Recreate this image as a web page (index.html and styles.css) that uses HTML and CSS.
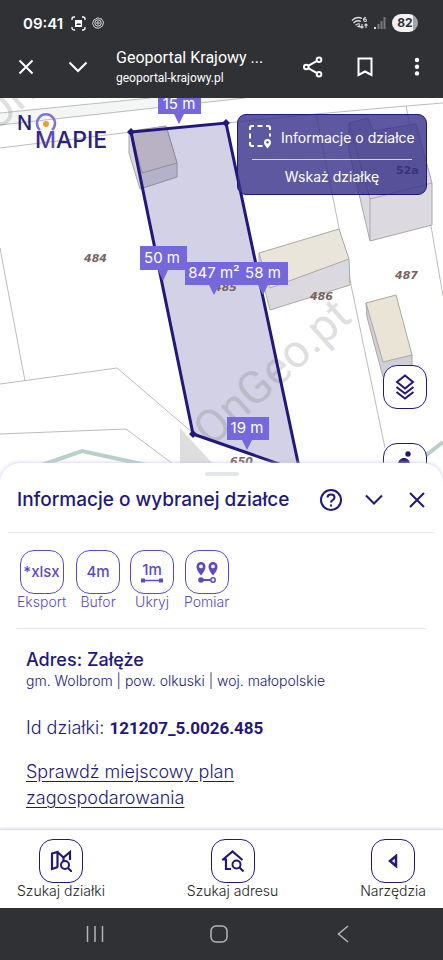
FILE: index.html
```html
<!DOCTYPE html>
<html lang="pl">
<head>
  <meta charset="UTF-8">
  <meta name="viewport" content="width=device-width, initial-scale=1">
  <title>Geoportal Krajowy</title>
  <link rel="stylesheet" href="styles.css">
</head>
<body>
  <header class="browser">
    <div class="status">
      <span class="time">09:41</span>
      <svg width="15" height="15" viewBox="0 0 15 15" fill="none" stroke="#fff" stroke-width="1.3">
        <path d="M1 4V3a2 2 0 0 1 2-2h1M11 1h1a2 2 0 0 1 2 2v1M14 11v1a2 2 0 0 1-2 2h-1M4 14H3a2 2 0 0 1-2-2v-1"/>
        <path d="M4 4h7v7H4z" fill="#fff" stroke="none"/>
        <path d="M5 9l2-2 1 1 1-1 1 2z" fill="#303135" stroke="none"/>
      </svg>
      <svg width="12" height="12" viewBox="0 0 12 12" fill="none" stroke="#ddd">
        <path d="M6 .7l1.6 1 1.9.1.9 1.7 1.1 1.6-.5 1.9-.4 1.9-1.6 1-1.6 1L6 11.300l-1.9-.5-1.800-.7-.8-1.700L.6 6.500l.6-1.800.7-1.800L3.700 2z" stroke-width="1"/>
        <circle cx="6" cy="6" r="3.200"/>
        <circle cx="6" cy="6" r="1.200"/>
      </svg>
      <svg class="wifi" width="17" height="14" viewBox="0 0 17 14" fill="none" stroke="#ddd" stroke-width="1.300">
        <path d="M1 4.500C4 1.300 8 1 11 2.500M2.500 7c2.300-2.400 5-2.700 7.500-1.500M4.500 9.200C6 7.700 7.500 7.600 9 8.200"/>
        <path d="M7 10.500l1.500-1 .5 1.500zM15 1.500c-3-.5-3 4-1 4s2-3-1-2.200M11 8v4M9.500 10.500L11 12l1.500-1.500M15 12V8M13.500 9.500L15 8l1.500 1.500" stroke-width="1.100"/>
      </svg>
      <svg width="12" height="12" viewBox="0 0 12 12">
        <path d="M0 10h2v2H0z" fill="#ddd"/>
        <path d="M3.500 7h2v5h-2zM6.500 4h2v8h-2zM9.500 0h2v12h-2z" fill="#77787b"/>
      </svg>
      <span class="battery">82</span>
    </div>
    <div class="toolbar">
      <button aria-label="Zamknij kartę"><svg width="16" height="16" viewBox="0 0 16 16"><path d="M1.500 1.500l13 13M14.500 1.500l-13 13"/></svg></button>
      <button aria-label="Zwiń"><svg width="20" height="12" viewBox="0 0 20 12"><path d="M1.500 1.500L10 10l8.500-8.500"/></svg></button>
      <div class="page">
        <div class="page-title">Geoportal Krajowy ...</div>
        <div class="page-url">geoportal-krajowy.pl</div>
      </div>
      <button aria-label="Udostępnij"><svg width="20" height="22" viewBox="0 0 20 22"><path d="M5.200 9.800l8.800-5M5.200 12.200l8.800 5"/><circle cx="3.300" cy="11" r="2.300"/><circle cx="16" cy="3.700" r="2.300"/><circle cx="16" cy="18.300" r="2.300"/></svg></button>
      <button aria-label="Zakładka"><svg width="16" height="20" viewBox="0 0 16 20"><path d="M1.500 1.500h13v16.500L8 14.500 1.500 18z"/></svg></button>
      <button aria-label="Menu"><svg width="6" height="20" viewBox="0 0 6 20"><g fill="#fff" stroke="none"><circle cx="3" cy="3" r="2.200"/><circle cx="3" cy="9.700" r="2.200"/><circle cx="3" cy="16.400" r="2.200"/></g></svg></button>
    </div>
  </header>

  <main class="map">
    <svg class="map-canvas" viewBox="0 0 443 386" preserveAspectRatio="xMidYMin slice">
      <path d="M0 15L150 0H250L0 27z" fill="#f3f6f4"/>
      <g fill="none" stroke="#bcbcba">
        <path d="M0 15L150 0M0 27L245 0M0 50L131 34M226 25L316 16 406 8 443 5"/>
        <path d="M316 16L339 130 351 187 385 350M406 8L431 128 443 198"/>
        <path d="M0 150L25 283M0 286L117 270 193 335M0 336L126 331 173 366 195 386"/>
      </g>
      <path d="M30 371L82 353 160 370M420 362L443 344" fill="none" stroke="#b9cfca" stroke-width="4"/>

      <g stroke="#aaa8a6" stroke-linejoin="round">
        <path d="M349 25V53L370 143 432 127V85L416 26 373 33 368 20z" fill="#dcd9e1"/>
        <path d="M349 25L370 101 432 85M370 101V143" fill="none"/>
        <path d="M259 155V169L270 212 350 187 349 161z" fill="#dbd8df"/>
        <path d="M259 155L339 131 349 161 270 190z" fill="#eae5da"/>
        <path d="M366 205L367 219 383 279 412 272V257z" fill="#d0ced8"/>
        <path d="M366 205L396 197 412 257 383 264z" fill="#e9e4d5"/>
        <path d="M129 34V55L140 91 177 79V65L166 28z" fill="#d9d7df"/>
        <path d="M131 33L166 28 177 65 142 75z" fill="#dfd8d6"/>
      </g>

      <path d="M180 330V366H213z" fill="#dedede"/>
      <path d="M131 34L226 25 302 384V374L193 336z" fill="#22187c" fill-opacity=".2"/>
      <g class="watermark">
        <text transform="translate(211 350) rotate(-42)">OnGeo.pt</text>
        <text transform="translate(-4 35) rotate(-42)">On</text>
      </g>
      <path d="M302 374L193 336 131 34 226 25 300 374" fill="none" stroke="#22187c" stroke-width="3"/>
      <path d="M131 30l4 4-4 4-4-4zM226 21l4 4-4 4-4-4zM193 332l4 4-4 4-4-4z" fill="#22187c"/>

      <g class="plot">
        <text x="84" y="164">484</text>
        <text x="214" y="193">485</text>
        <text x="310" y="202">486</text>
        <text x="395" y="181">487</text>
        <text x="230" y="367">650</text>
        <text class="house" x="396" y="76">52a</text>
      </g>

      <path d="M158 0H201V16H184L179 26 174 16H158zM140 148H187V172H168L163 183 158 172H140zM185 164H288V187H268L263 197 258 187H219L214 197 209 187H185zM227 319H269V342H252L247 352 242 342H227z" fill="#7568dd"/>
      <g class="measure">
        <text x="179" y="11">15 m</text>
        <text x="162" y="165">50 m</text>
        <text x="214" y="180">847 m²</text>
        <text x="263" y="180">58 m</text>
        <text x="247" y="335">19 m</text>
      </g>
    </svg>

    <a class="logo" href="#" aria-label="Na mapie">
      <svg width="98" height="42" viewBox="0 0 98 42">
        <defs>
          <linearGradient id="pin" x1="0" x2="1"><stop offset="0" stop-color="#2b2080"/><stop offset=".5" stop-color="#8c7ff0"/><stop offset="1" stop-color="#2b2080"/></linearGradient>
        </defs>
        <text x="0" y="18" font-size="20">N</text>
        <path d="M23 18a9 9 0 1 1 12 0" fill="none" stroke="#7f72dc" stroke-width="2.500"/>
        <circle cx="29" cy="12" r="3" fill="#f19a38"/>
        <text x="18" y="36" font-size="23"><tspan fill="url(#pin)">M</tspan>APIE</text>
      </svg>
    </a>

    <div class="hint">
      <div class="hint-title">
        <svg width="24" height="24" viewBox="0 0 24 24" fill="none" stroke="#fff" stroke-width="2">
          <path d="M1 5V3a2 2 0 0 1 2-2h2M8.500 1h5M17 1h2a2 2 0 0 1 2 2v2M21 8.500v3M1 8.500v5M1 17v2a2 2 0 0 0 2 2h2M8.500 21h5"/>
          <path d="M18.500 23.500c-2-2.500-3.500-4-3.500-6a3.500 3.500 0 0 1 7 0c0 2-1.500 3.500-3.500 6z" fill="#fff" stroke="none"/>
          <circle cx="18.500" cy="17.300" r="1.200" fill="#5b549c" stroke="none"/>
        </svg>
        Informacje o działce
      </div>
      <div class="hint-text">Wskaż działkę</div>
    </div>

    <div class="map-tools">
      <button class="tile" aria-label="Warstwy"><svg width="20" height="26" viewBox="0 0 20 26"><path d="M10 1.500l8 6.500-8 6.500L2 8zM1.500 13l8.500 6.500 8.500-6.500M1.500 18l8.500 6.500 8.500-6.500"/></svg></button>
      <button class="tile" aria-label="Widok ulicy"><svg width="18" height="28" viewBox="0 0 18 28"><g fill="#22187c" stroke="none"><circle cx="12" cy="3" r="2.700"/><path d="M2 14c0-5 3-7 6-7s6 2 6 7h-3v11H7V14z"/></g></svg></button>
    </div>
  </main>

  <section class="sheet">
    <div class="handle"></div>
    <div class="sheet-head">
      <h1>Informacje o wybranej działce</h1>
      <button aria-label="Pomoc"><svg width="22" height="22" viewBox="0 0 22 22"><circle cx="11" cy="11" r="10"/><path d="M7.500 8.500C7.500 4.500 14.500 4.500 14.500 8.500c0 2.500-3.500 2.500-3.500 5M11 15.500v2"/></svg></button>
      <button aria-label="Zwiń panel"><svg width="18" height="11" viewBox="0 0 18 11"><path d="M1 1.500l8 8 8-8"/></svg></button>
      <button aria-label="Zamknij panel"><svg width="16" height="16" viewBox="0 0 16 16"><path d="M1 1l14 14M15 1L1 15"/></svg></button>
    </div>
    <div class="actions">
      <button class="action"><span class="tile">*xlsx</span>Eksport</button>
      <button class="action"><span class="tile">4m</span>Bufor</button>
      <button class="action">
        <span class="tile ruler">1m<svg width="24" height="5" viewBox="0 0 24 5"><path d="M2 2.500h20" stroke-width="1.500"/><path d="M1 .5h4v4H1zM19 .5h4v4h-4z" fill="#5a4cc0" stroke="none"/></svg></span>
        Ukryj
      </button>
      <button class="action">
        <span class="tile"><svg width="22" height="22" viewBox="0 0 22 22">
          <path fill-rule="evenodd" fill="#5a4cc0" stroke="none" d="M5 14.500C2 11 .5 8 .5 5.500a4.500 4.500 0 0 1 9 0C9.500 8 8 11 5 14.500zM5 3.500a1.900 1.900 0 1 0 0 3.800 1.900 1.900 0 0 0 0-3.800zM17 14.500C14 11 12.500 8 12.500 5.500a4.500 4.500 0 0 1 9 0c0 2.500-1.500 5.500-4.500 9zM17 3.500a1.900 1.900 0 1 0 0 3.800 1.900 1.900 0 0 0 0-3.800z"/>
          <circle cx="5" cy="19" r="2.800" fill="#5a4cc0" stroke="none"/><path d="M5 19h9.500"/><circle cx="17" cy="19" r="2.200" stroke-width="1.500"/>
        </svg></span>
        Pomiar
      </button>
    </div>
    <div class="details">
      <h2>Adres: Załęże</h2>
      <p class="region">gm. Wolbrom | pow. olkuski | woj. małopolskie</p>
      <p class="plot-id">Id działki: <strong>121207_5.0026.485</strong></p>
      <a class="plan" href="#">Sprawdź miejscowy plan<br>zagospodarowania</a>
    </div>
  </section>

  <nav class="tabs">
    <button class="tab">
      <span class="tile"><svg width="22" height="22" viewBox="0 0 22 22"><path d="M8 17l-6 2V3.500L7.500 2v15M7.500 2l6 5.500L20 2v8M13.500 7.500V11" stroke-width="2.200"/><circle cx="15" cy="15" r="4"/><path d="M18 18l4 4"/></svg></span>
      Szukaj działki
    </button>
    <button class="tab">
      <span class="tile"><svg width="22" height="22" viewBox="0 0 22 22"><path d="M9 19H4V9.500H1L10.500 1.500 20.500 10" stroke-width="2.200"/><circle cx="14.500" cy="14.500" r="4"/><path d="M17.500 17.500l4 4"/></svg></span>
      Szukaj adresu
    </button>
    <button class="tab">
      <span class="tile"><svg width="10" height="14" viewBox="0 0 10 14"><path d="M8 2v10L2 7z" stroke-width="2.500"/></svg></span>
      Narzędzia
    </button>
  </nav>

  <footer class="system">
    <button aria-label="Ostatnie"><svg width="18" height="18" viewBox="0 0 18 18"><path d="M1.500 1v16M9 1v16M16.500 1v16"/></svg></button>
    <button aria-label="Ekran główny"><svg width="18" height="18" viewBox="0 0 18 18"><rect x="1" y="1" width="16" height="16" rx="5"/></svg></button>
    <button aria-label="Wstecz"><svg width="12" height="18" viewBox="0 0 12 18"><path d="M11 1L1.500 9l9.500 8"/></svg></button>
  </footer>
</body>
</html>
```
FILE: styles.css
```css
* {
  box-sizing: border-box;
}
body {
  margin: 0;
  min-height: 100vh;
  display: flex;
  flex-direction: column;
  font-family: Inter, "Open Sans", sans-serif;
  font-size: 14px;
  font-weight: 300;
  color: #22187c;
  background: #ffffff;
}
h1, h2, p {
  margin: 0;
}
button {
  font: inherit;
  color: inherit;
  background: none;
  border: none;
  padding: 0;
  cursor: pointer;
}
svg {
  display: block;
}
button svg {
  fill: none;
  stroke: currentColor;
  stroke-width: 2;
}

/* browser bars */
.browser {
  height: 98px;
  background: #303135;
  color: #ffffff;
}
.status {
  display: flex;
  align-items: center;
  gap: 6px;
  height: 46px;
  padding: 0 25px 0 23px;
}
.time {
  font-size: 15px;
  font-weight: 600;
  margin-right: 2px;
}
.wifi {
  margin-left: auto;
}
.battery {
  width: 26px;
  border-radius: 9px;
  background: linear-gradient(90deg, #f2f2f2 82%, #a5a5a7 82%);
  color: #303135;
  font-size: 12px;
  font-weight: 700;
  line-height: 18px;
  text-align: center;
}
.toolbar {
  display: flex;
  align-items: center;
  gap: 20px;
  padding: 0 10px;
  height: 42px;
}
.toolbar button {
  display: grid;
  place-items: center;
  width: 32px;
  height: 32px;
}
.page {
  flex: 1;
  min-width: 0;
  font-family: Roboto, sans-serif;
  font-weight: 400;
  padding-left: 2px;
  white-space: nowrap;
}
.page-title {
  font-size: 16px;
  line-height: 22px;
}
.page-url {
  font-size: 12px;
  line-height: 18px;
}

/* map */
.map {
  position: relative;
  flex: 1;
  min-height: 300px;
  overflow: hidden;
}
.map-canvas {
  position: absolute;
  width: 100%;
  height: 100%;
}
.watermark {
  font-family: Roboto, sans-serif;
  font-size: 46px;
  font-weight: 400;
  fill: #555555;
  fill-opacity: 0.2;
}
.plot {
  font-family: "DejaVu Sans", sans-serif;
  font-size: 11px;
  font-weight: bold;
  font-style: italic;
  fill: #77645f;
}
.house {
  font-style: normal;
  fill: #444444;
}
.measure {
  font-size: 15px;
  font-weight: 400;
  fill: #ffffff;
  text-anchor: middle;
}
.logo {
  position: absolute;
  top: 14px;
  left: 17px;
  font-weight: 500;
}
.logo text {
  fill: #2b2080;
}
.hint {
  position: absolute;
  top: 16px;
  right: 16px;
  width: 190px;
  padding: 0 8px 0 11px;
  border: 1px solid #22187c;
  border-radius: 9px;
  background: rgba(54, 46, 136, 0.8);
  color: #ffffff;
  font-weight: 400;
  white-space: nowrap;
}
.hint-title {
  display: flex;
  align-items: center;
  gap: 8px;
  height: 44px;
}
.hint-text {
  margin: 0 6px 0 3px;
  border-top: 1px solid #d6d4e8;
  line-height: 34px;
  text-align: center;
}
.map-tools {
  position: absolute;
  top: 267px;
  right: 16px;
  display: grid;
  gap: 34px;
}
.tile {
  display: grid;
  place-items: center;
  align-content: center;
  width: 44px;
  height: 44px;
  border: 1px solid currentColor;
  border-radius: 14px;
  background: #ffffff;
}

/* plot panel */
.sheet {
  position: relative;
  margin-top: -20px;
  border-radius: 20px 20px 0 0;
  background: #ffffff;
  box-shadow: 0 0 4px #c9c4ec;
}
.handle {
  width: 34px;
  height: 4px;
  margin: 0 auto;
  border-radius: 2px;
  background: #e3e6ea;
  transform: translateY(9px);
}
.sheet-head {
  display: flex;
  align-items: center;
  gap: 11px;
  height: 66px;
  margin: 0 8px;
  padding: 0 2px 0 9px;
  border-bottom: 1px solid #ececf0;
}
.sheet-head h1 {
  flex: 1;
  font-size: 19px;
  font-weight: 500;
  white-space: nowrap;
}
.sheet-head button {
  display: grid;
  place-items: center;
  width: 32px;
  height: 32px;
}
.actions {
  display: flex;
  gap: 10px;
  margin: 0 17px;
  padding: 17px 0 18px;
  border-bottom: 1px solid #e6e6ea;
  color: #5a4cc0;
}
.action, .tab {
  display: flex;
  flex-direction: column;
  align-items: center;
  line-height: 16px;
}
.action .tile {
  font-size: 15px;
  font-weight: 500;
}
.details {
  padding: 20px 26px 19px;
}
.details h2 {
  font-size: 18px;
  font-weight: 500;
  line-height: 22px;
}
.region {
  line-height: 20px;
}
.plot-id {
  margin: 24px 0 18px;
  font-size: 18px;
  line-height: 26px;
}
.plot-id strong {
  font-family: Roboto, sans-serif;
  font-size: 17px;
  font-weight: 700;
}
.plan {
  display: block;
  font-size: 18px;
  line-height: 26px;
  color: inherit;
  text-underline-offset: 3px;
}

/* bottom bars */
.tabs {
  position: relative;
  display: flex;
  justify-content: space-between;
  padding: 9px 17px;
  background: #ffffff;
  box-shadow: 0 0 3px 1px #c9c4ec;
}
.tab {
  color: #222222;
}
.tab .tile {
  color: #22187c;
}
.system {
  position: relative;
  display: grid;
  grid-template-columns: repeat(3, 1fr);
  height: 52px;
  padding: 0 38px 0 33px;
  background: #303135;
  color: #b5b5b8;
}
.system button {
  display: grid;
  place-items: center;
}
.system svg {
  stroke-width: 1.5;
}
```
